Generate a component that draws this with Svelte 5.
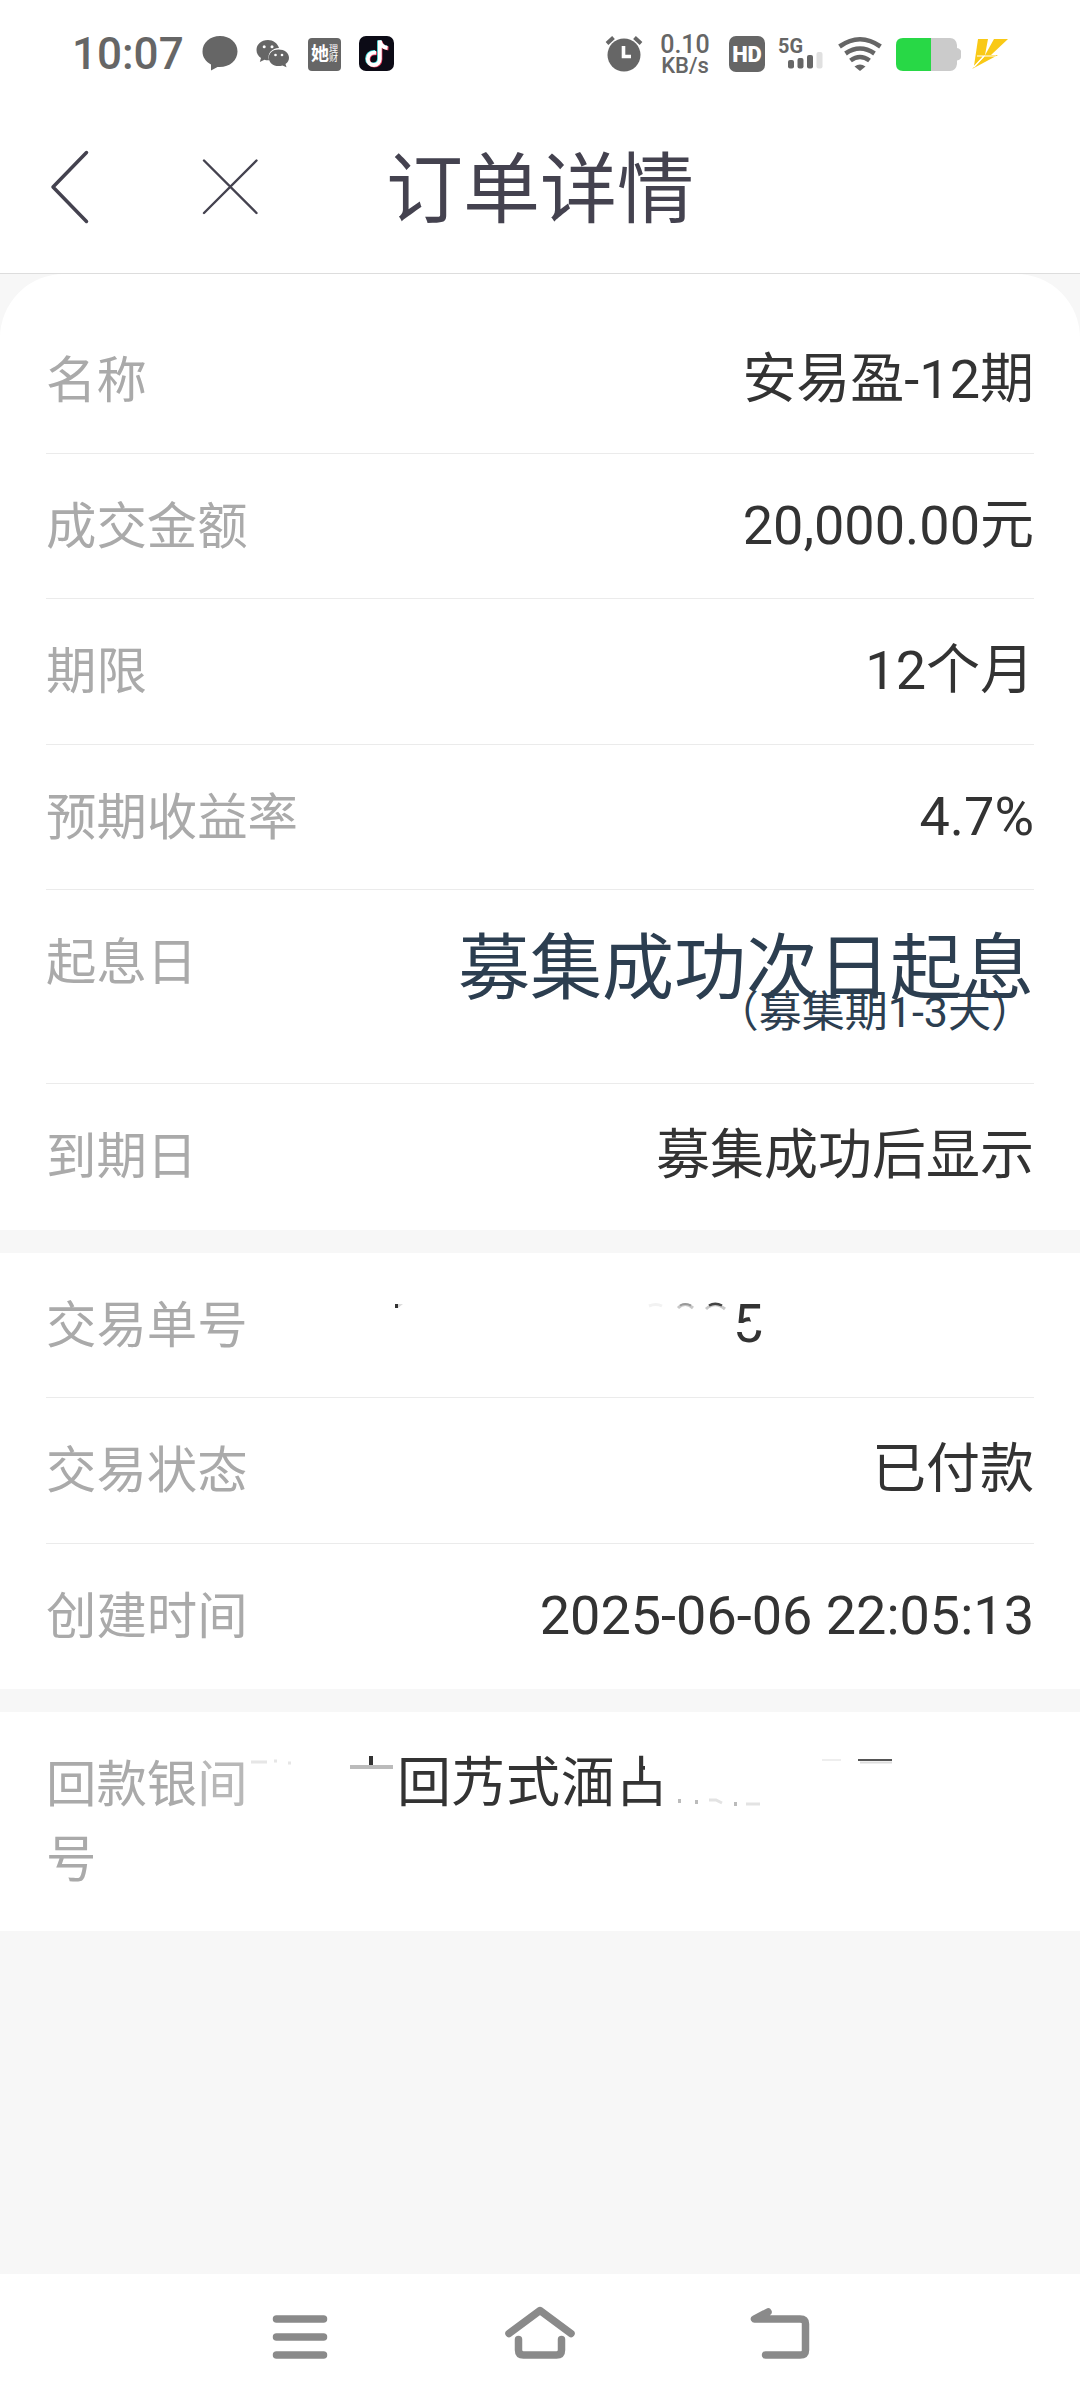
<script lang="ts">
  type Row = { label: string; value: string };

  const productRows: Row[] = [
    { label: "名称", value: "安易盈-12期" },
    { label: "成交金额", value: "20,000.00元" },
    { label: "期限", value: "12个月" },
    { label: "预期收益率", value: "4.7%" },
  ];

  const tradeRows: Row[] = [
    { label: "交易状态", value: "已付款" },
    { label: "创建时间", value: "2025-06-06 22:05:13" },
  ];
</script>

<div class="screen">
  <div class="status-bar">
    <span class="clock">10:07</span>
    <svg class="bubble" width="36" height="36" viewBox="0 0 36 36">
      <path d="M18 0C8 0 .5 6.700 .500 15.500C.500 21 3.500 25.300 9 28.500V34.500L15.500 31C27 32 35.500 24.500 35.500 15.500C35.500 6.700 28 0 18 0Z" fill="#666" />
    </svg>
    <svg class="wechat" width="34" height="30" viewBox="0 0 34 30">
      <path d="M12 1C5 1 .5 5.500 .500 11C.500 14.500 2.200 17 5 19L3.800 23L8.500 20.700Q10 21.200 12 21.200H13C11 14 16 9.500 23 9C21.500 4 17 1 12 1Z" fill="#666" />
      <path d="M22.500 10.500C17 10.500 12.800 14 12.800 18.700S17 27 22.500 27Q24.500 27 26.500 26.400L30.500 28.300L29.500 25Q33 22.500 33 18.700C33 14 28.500 10.500 22.500 10.500Z" fill="#666" />
      <g fill="#fff">
        <circle cx="8.200" cy="7.800" r="1.500" /><circle cx="16" cy="7.800" r="1.500" />
        <circle cx="19.500" cy="16" r="1.300" /><circle cx="26" cy="16" r="1.300" />
      </g>
    </svg>
    <div class="licai">
      <b>她</b>
      <span>理<br />财</span>
    </div>
    <svg class="douyin" width="36" height="36" viewBox="0 0 36 36">
      <rect width="35" height="35" rx="7" fill="#0c0b16" />
      <g fill="none" stroke-width="3.800">
        <path d="M16 16C10 15.500 8 20 8 22.500C8 26 10.500 28.500 14 28.500S20 26 20 22.500V4.500C21 8.500 24 11 28 11.500" stroke="#43dfe0" />
        <path d="M18 17.500C12 16.500 9.500 20 9.500 23.500C9.500 27 12 29.500 15.500 29.500S21.500 27 21.500 23.500V5.500C22.500 9.500 25 12 29.500 12.500" stroke="#ee3a5c" />
        <path d="M17 16.800C11.500 16 8.800 19.500 8.800 23C8.800 26.500 11.500 29 14.800 29S20.800 26.500 20.800 23V4.500C21.500 9 24.500 11.500 28.500 12" stroke="#fff" />
      </g>
    </svg>

    <svg class="alarm" width="36" height="36" viewBox="0 0 36 36">
      <circle cx="18" cy="19" r="16.500" fill="#666" />
      <path d="M1 7.500L7.500 1.500M35 7.500L28.500 1.500" stroke="#666" stroke-width="4" />
      <path d="M17.500 10V20.500H25" fill="none" stroke="#fff" stroke-width="3.600" />
    </svg>
    <div class="speed">
      <span>0.10</span>
      <small>KB/s</small>
    </div>
    <div class="hd">HD</div>
    <svg class="signal" width="44" height="32" viewBox="0 0 44 32">
      <text x="-1" y="14.500" textLength="25" lengthAdjust="spacingAndGlyphs">5G</text>
      <g fill="#666">
        <rect x="9" y="22" width="6" height="8.500" rx="2" />
        <rect x="18.500" y="20" width="6" height="10.500" rx="2" />
        <rect x="28" y="17" width="6" height="13.500" rx="2" />
      </g>
      <rect x="37.500" y="14" width="6" height="16.500" rx="2" fill="#e0e0e0" />
    </svg>
    <svg class="wifi" width="44" height="34" viewBox="0 0 44 34">
      <g fill="none" stroke="#666" stroke-width="4.600">
        <path d="M1.500 9.500Q22 -5 42.500 9.500" />
        <path d="M7.500 16.500Q22 6.500 36.500 16.500" />
        <path d="M12.500 23.500Q22 16.500 31.500 23.500" />
      </g>
      <path d="M16.500 29.500Q22 25.500 27.500 29.500L22 34Z" fill="#666" />
    </svg>
    <svg class="battery" width="66" height="33" viewBox="0 0 66 33">
      <path d="M35 0H54Q60 0 61 7V10Q65 11 65 13.500V19Q65 21.500 61 22.500V26Q60 33 54 33H35Z" fill="#cbcbcb" />
      <path d="M7 0H35V33H7Q0 33 0 26V7Q0 0 7 0Z" fill="#28d846" />
    </svg>
    <svg class="bolt" width="38" height="31" viewBox="0 0 38 31">
      <path d="M6 0H16L13 16L2 27Z" fill="#f9c916" />
      <path d="M20 0H36L19 16H26L0 30L12 18L22 0Z" fill="#f9c916" />
      <path d="M5 17H24M12 17L2 28" fill="none" stroke="#fff" stroke-width="1.200" />
    </svg>
  </div>

  <header class="nav-bar">
    <svg class="back" width="40" height="74" viewBox="0 0 40 74">
      <path d="M36.500 2.500L3 37L36.500 71.500" />
    </svg>
    <svg class="close" width="56" height="58" viewBox="0 0 56 58">
      <path d="M1 2.500L53.500 55M53.500 2.500L1 55" />
    </svg>
    <h1>订单详情</h1>
  </header>

  <main>
    <section class="card first">
      {#each productRows as row}
        <div class="row">
          <span class="label">{row.label}</span>
          <span class="value">{row.value}</span>
        </div>
      {/each}
      <div class="row tall">
        <span class="label">起息日</span>
        <div class="start-date">
          <span>募集成功次日起息</span>
          <small>（募集期1-3天）</small>
        </div>
      </div>
      <div class="row">
        <span class="label">到期日</span>
        <span class="value">募集成功后显示</span>
      </div>
    </section>

    <section class="card">
      <div class="row">
        <span class="label">交易单号</span>
        <!-- wiped order number: only the last digit is readable -->
        <svg class="serial" width="640" height="75" viewBox="0 0 640 75">
          <path d="M1 16H4V20H1Z" fill="#333" />
          <path d="M4 16H9L4 20Z" fill="#ddd" />
          <g fill="none" stroke-width="3">
            <path d="M255 18Q262 15 268 18" stroke="#f2f2f2" />
            <path d="M284 20Q291 13 299 20" stroke="#c8c8c8" />
            <path d="M286 17.500Q291 14.500 297 17.500" stroke="#999" stroke-width="2" />
            <path d="M312 21Q321 12.500 331 21" stroke="#c8c8c8" />
            <path d="M315 17.500Q321 14 328 17.500" stroke="#444" stroke-width="2.500" />
          </g>
          <text x="339" y="54">5</text>
          <path d="M355 28H370V43L361 42L352 37L341 38V35L352 35L359 39Z" fill="#fff" />
        </svg>
      </div>
      {#each tradeRows as row}
        <div class="row">
          <span class="label">{row.label}</span>
          <span class="value">{row.value}</span>
        </div>
      {/each}
    </section>

    <section class="card">
      <div class="row">
        <span class="label account">回款银<i>间</i><br />号</span>
        <!-- wiped account name -->
        <svg class="holder" width="800" height="75" viewBox="0 0 800 75">
          <g fill="none">
            <path d="M17 15H33M40 14H43M54 16H57" stroke="#e6e6e6" stroke-width="3" />
            <path d="M116 20H159" stroke="#bbb" stroke-width="4" />
            <path d="M137 9V18" stroke="#333" stroke-width="4" />
            <path d="M444 54H447M461 55H464M500 57H503" stroke="#bbb" stroke-width="4" />
            <path d="M475 53H482L488 56M512 57H526" stroke="#e3e3e3" stroke-width="3" />
            <path d="M588 13H607" stroke="#ddd" stroke-width="1" />
            <path d="M624 13H658" stroke="#555" stroke-width="2" />
            <path d="M626 15.500H658" stroke="#ddd" stroke-width="2" />
          </g>
          <text x="163" y="55" textLength="272" lengthAdjust="spacing">回艿式湎占</text>
          <path d="M411 12H432V29H411Z" fill="#fff" />
        </svg>
      </div>
    </section>
  </main>

  <footer>
    <svg width="64" height="60" viewBox="-32 -30 64 60">
      <path d="M-23.500 -18H23.500M-23.500 0H23.500M-23.500 18H23.500" />
    </svg>
    <svg width="64" height="60" viewBox="-32 -30 64 60">
      <path d="M-31 -3.500L0 -26.500L31 -3.500M-21.500 2.500V13Q-21.500 18 -16.500 18H16.500Q21.500 18 21.500 13V2.500" />
    </svg>
    <svg width="64" height="60" viewBox="-32 -30 64 60">
      <path d="M-12 -25L-25.500 -18H20Q25.500 -18 25.500 -13V13Q25.500 18 20 18H-14.500" />
    </svg>
  </footer>
</div>

<style>
  :global(body) {
    margin: 0;
    background: #f7f7f7;
  }

  .screen {
    display: flex;
    flex-direction: column;
    width: 1080px;
    height: 2400px;
    overflow: hidden;
    background: #f7f7f7;
    font-family: Roboto, "Noto Sans CJK SC", sans-serif;
  }

  svg {
    display: block;
    flex: none;
    overflow: visible;
  }

  .status-bar {
    display: flex;
    align-items: center;
    box-sizing: border-box;
    height: 108px;
    padding-left: 72px;
    background: #fff;
    color: #666;
  }

  .clock {
    width: 130px;
    font-size: 44px;
    font-weight: 500;
    line-height: 50px;
  }

  .wechat {
    margin-left: 18px;
  }

  .licai {
    display: flex;
    align-items: center;
    justify-content: center;
    width: 33px;
    height: 33px;
    margin-left: 18px;
    border-radius: 4px;
    background: #666;
    color: #fff;
    line-height: 1;
  }

  .licai b {
    font-size: 18px;
    font-weight: 700;
  }

  .licai span {
    font-size: 9px;
    line-height: 9px;
  }

  .douyin {
    margin-left: 18px;
  }

  .alarm {
    margin-left: 211px;
  }

  .speed {
    display: flex;
    flex-direction: column;
    align-items: center;
    width: 50px;
    margin-left: 18px;
    padding-top: 2px;
    font-size: 25px;
    font-weight: 500;
    line-height: 21px;
  }

  .speed small {
    font-size: 22px;
  }

  .hd {
    width: 36px;
    height: 36px;
    margin-left: 19px;
    border-radius: 7px;
    background: #666;
    color: #fff;
    font-size: 22px;
    font-weight: 900;
    line-height: 37px;
    text-align: center;
  }

  .signal {
    margin-left: 14px;
  }

  .signal text {
    fill: #666;
    font-size: 20px;
    font-weight: 700;
  }

  .wifi {
    margin-left: 15px;
  }

  .battery {
    margin-left: 14px;
  }

  .bolt {
    margin-left: 10px;
  }

  .nav-bar {
    display: flex;
    align-items: center;
    box-sizing: border-box;
    height: 166px;
    padding: 0 0 8px 50px;
    border-bottom: 1px solid #ddd;
    background: #fff;
  }

  .nav-bar path {
    fill: none;
    stroke: #44424f;
    stroke-width: 3.5;
    stroke-linecap: round;
    stroke-linejoin: round;
  }

  .close {
    margin-left: 113px;
  }

  .nav-bar .close path {
    stroke-width: 2.4;
  }

  h1 {
    margin: 8px 0 0 127px;
    color: #44424f;
    font-size: 77px;
    font-weight: 400;
    line-height: 100px;
  }

  main {
    display: flex;
    flex: 1;
    flex-direction: column;
    gap: 23px;
  }

  .card {
    padding: 0 46px;
    background: #fff;
  }

  .first {
    padding-top: 34px;
    border-radius: 64px 64px 0 0;
  }

  .row {
    display: flex;
    justify-content: space-between;
    box-sizing: border-box;
    min-height: 145.5px;
    padding: 35px 0 34px;
    border-bottom: 1px solid #ebebeb;
    line-height: 75px;
  }

  .row:last-child {
    border-bottom: none;
  }

  .tall {
    height: 194px;
  }

  .label {
    color: #aaa;
    font-size: 50.4px;
  }

  .value {
    color: #333;
    font-size: 54px;
    line-height: 73px;
  }

  .start-date {
    display: flex;
    flex-direction: column;
    align-items: flex-end;
    color: #2c3e50;
    font-size: 72px;
    line-height: 88px;
  }

  .start-date small {
    margin-top: -3px;
    font-size: 43px;
    line-height: 4px;
  }

  .serial text,
  .holder text {
    fill: #333;
    font-size: 54px;
  }

  .account {
    width: 202px;
    margin-right: -14px;
  }

  .account i {
    color: #b8b8b8;
    font-style: normal;
  }

  footer {
    display: grid;
    grid-template-columns: repeat(3, 240px);
    align-items: center;
    justify-content: center;
    justify-items: center;
    height: 126px;
    background: #fff;
  }

  footer path {
    fill: none;
    stroke: #8a8a8a;
    stroke-width: 7.5;
    stroke-linecap: round;
    stroke-linejoin: round;
  }
</style>
